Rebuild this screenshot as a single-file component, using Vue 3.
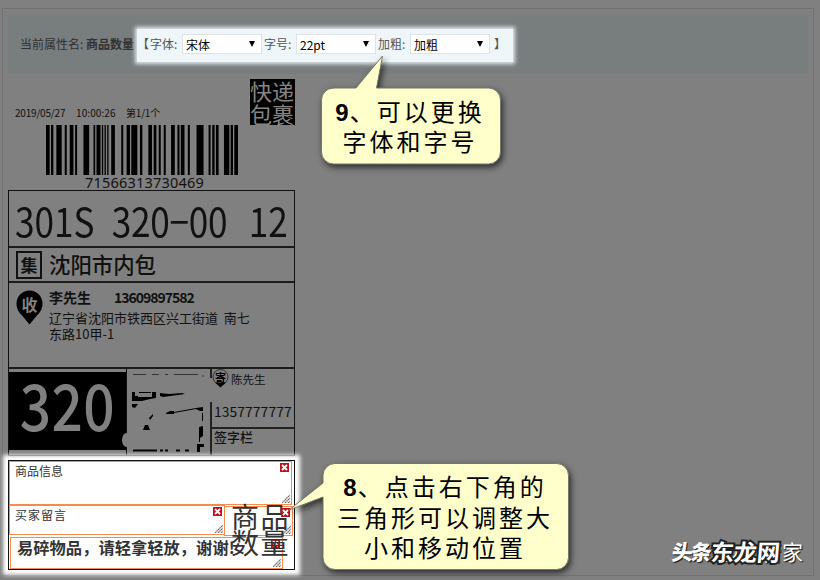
<template>
  <div class="print-page">
    <div class="panel">
      <div class="toolbar">
        <span class="current">当前属性名: <b>商品数量</b></span>
        <div class="font-options">
          <span class="bracket left">【</span>
          <template v-for="item in options" :key="item.label">
            <label>{{ item.label }}:</label>
            <div class="select"><span>{{ item.value }}</span><i></i></div>
          </template>
          <span class="bracket right">】</span>
        </div>
      </div>

      <div class="waybill">
        <div class="waybill-top">
          <div class="print-info">
            <div class="print-time"><span>2019/05/27</span><span>10:00:26</span><span>第1/1个</span></div>
            <svg class="barcode" viewBox="138 0 574 150" preserveAspectRatio="none">
              <rect v-for="(bar, i) in bars" :key="i" :x="bar[0]" y="0" :width="bar[1]" height="150" />
            </svg>
            <div class="barcode-no">71566313730469</div>
          </div>
          <div class="tag">快递<br>包裹</div>
        </div>

        <div class="waybill-body">
          <div class="row route">
            <div class="route-code"><span>301S</span><span>320−00</span><span>12</span></div>
          </div>
          <div class="row hub">
            <span class="hub-icon">集</span>
            <span class="hub-name">沈阳市内包</span>
          </div>
          <div class="row receiver">
            <svg class="pin" width="27" height="35" viewBox="0 0 27 35">
              <path d="M13.5 0.5a13 13 0 0 0-13 13c0 6 3 9.500 6 12.500l7 8.500 7-8.500c3-3 6-6.500 6-12.500a13 13 0 0 0-13-13z" />
              <text x="13.500" y="21" text-anchor="middle" font-size="16" font-weight="bold" fill="#808080">收</text>
            </svg>
            <div class="receiver-info">
              <div class="receiver-name"><span>李先生</span><span class="phone">13609897582</span></div>
              <div class="address">辽宁省沈阳市铁西区兴工街道&nbsp; 南七<br>东路10甲-1</div>
            </div>
          </div>
          <div class="row bottom">
            <div class="area"><div class="area-code"><span>320</span></div></div>
            <div class="qr">
              <svg width="83" height="86" viewBox="0 0 83 86">
                <path d="M6 5.500h13M25 5.500h7M38 5.500h3M47 5.500h24M76 6v2" stroke="#333" stroke-width="1" />
                <path d="M5 23h3v4h3v1h14v-5h4v6l-6 1-8 2H5zM12 23h12v1H12zM33 24l9 1 13-1 3 1-22 3-3-1zM5 35h6l-3 4-3-1z" />
                <path d="M39 44l4-2h4v3h-8zM47 43l22-4v1l-22 4zM69 39l7-1v4h-3l-4-2zM22 49l4-4v2l-3 4z" />
                <path d="M16 61l2-5h3l2 5zM72 58l4-1v10l-3 2v4h-1zM70 75h7v3h-4v5h-3zM75 44h1v8h-1z" />
                <path d="M6 81.500h24M33 81.500h3M38 81.500h3M49 81.500h4M58 81.500h4" stroke="#000" stroke-width="2" />
                <path class="smudge" d="M81 9h4v24h-4z" />
                <ellipse class="smudge" cx="-.5" cy="71" rx="4.500" ry="7" />
              </svg>
            </div>
            <div class="sender">
              <div class="sender-info">
                <div class="sender-name">
                  <svg width="17" height="19" viewBox="0 0 17 19">
                    <circle cx="8.500" cy="8" r="7.500" fill="none" stroke="#333" />
                    <path d="M3 13.500h11L8.500 18.500z" />
                    <text x="8.500" y="12.500" text-anchor="middle" font-size="11" font-weight="bold">寄</text>
                  </svg>
                  <span>陈先生</span>
                </div>
                <div class="sender-phone">1357777777</div>
              </div>
              <div class="sign">签字栏</div>
            </div>
          </div>
        </div>
      </div>
    </div>

    <!-- draggable fields -->
    <div class="editor">
      <div v-for="f in fields" :key="f.name" class="field" :class="f.name">
        <span class="field-text">{{ f.text }}</span>
        <svg class="close" width="9" height="9" viewBox="0 0 9 9">
          <rect width="9" height="9" fill="#c4101c" />
          <path d="M2 2l5 5M7 2L2 7" stroke="#fff" stroke-width="1.800" />
        </svg>
        <svg class="grip" width="8" height="8" viewBox="0 0 8 8">
          <path d="M0 8L8 0M3 8l5-5M6 8l2-2" stroke="#666" stroke-width="1.200" stroke-dasharray="1.600 .5" />
        </svg>
      </div>
    </div>

    <div class="callout callout-font">
      <svg width="180" height="112" viewBox="0 0 180 112">
        <path d="M12 34H35L61.500 2 55.500 34H167.500a12 12 0 0 1 12 12V98a12 12 0 0 1-12 12H12.500a12 12 0 0 1-12-12V46a12 12 0 0 1 12-12z" />
      </svg>
      <p><b>9</b>、可以更换<br>字体和字号</p>
    </div>

    <div class="callout callout-size">
      <svg width="282" height="108" viewBox="0 0 282 108">
        <path d="M47 .5H268.500a12 12 0 0 1 12 12V94.500a12 12 0 0 1-12 12H47a12 12 0 0 1-12-12V34L1 47 35 20V12.500a12 12 0 0 1 12-12z" />
      </svg>
      <p><b>8</b>、点击右下角的<br>三角形可以调整大<br>小和移动位置</p>
    </div>

    <div class="watermark">
      <span class="wm-head">头条</span>
      <span class="wm-user">@</span>
      <span class="wm-site">东龙网</span>
      <span class="wm-tail">管家</span>
    </div>
  </div>
</template>

<script setup>
import { ref } from 'vue';

const options = ref([
  { label: '字体', value: '宋体' },
  { label: '字号', value: '22pt' },
  { label: '加粗', value: '加粗' },
]);

const fields = ref([
  { name: 'goods', text: '商品信息' },
  { name: 'message', text: '买家留言' },
  { name: 'notice', text: '易碎物品，请轻拿轻放，谢谢!' },
  { name: 'count', text: '商品数量' },
]);

// [x, width] of every bar
const bars = [
  [138, 11], [153, 7], [169, 16], [194, 6], [209, 11], [225, 6], [250, 17], [280, 5],
  [289, 12], [305, 4], [313, 4], [321, 4], [333, 11], [363, 6], [379, 10], [393, 18],
  [419, 7], [444, 11], [460, 8], [475, 6], [490, 6], [512, 11], [531, 6], [541, 11],
  [562, 6], [588, 21], [624, 6], [635, 7], [646, 8], [670, 16], [690, 7], [701, 11],
];
</script>

<style>
body {
  margin: 0;
  background: #808080;
}
</style>

<style scoped>
.print-page {
  position: relative;
  box-sizing: border-box;
  width: 820px;
  height: 580px;
  padding: 8px 0 0 2px;
  overflow: hidden;
  background: #808080;
  font-family: "Noto Sans CJK SC", sans-serif;
  color: #111;
}

.panel {
  box-sizing: border-box;
  width: 812px;
  height: 568px;
  padding: 5px;
  border: 1px solid #717171;
}

/* Toolbar */
.toolbar {
  display: flex;
  align-items: center;
  box-sizing: border-box;
  width: 800px;
  height: 60px;
  padding-left: 12px;
  background: #787d7e;
  font-size: 12px;
  white-space: nowrap;
}

.current {
  width: 117px;
  padding-bottom: 2px;
  color: #303233;
}

.font-options {
  display: flex;
  align-items: center;
  box-sizing: border-box;
  width: 376px;
  height: 33px;
  margin-top: 2px;
  padding-bottom: 2px;
  background: #eef6f9;
  box-shadow: 0 0 4px 2px #e4ecef;
  color: #555;
}

.font-options label {
  width: 32px;
  padding-bottom: 1px;
}

.bracket {
  width: 13px;
  padding-bottom: 1px;
}

.bracket.right {
  margin-left: 2px;
}

.select {
  display: flex;
  align-items: center;
  justify-content: space-between;
  box-sizing: border-box;
  width: 80px;
  height: 20px;
  margin-right: 2px;
  padding: 0 6px 0 3px;
  border: 1px solid #dfe3e5;
  background: #fff;
  color: #000;
}

.select i {
  border: 3.5px solid transparent;
  border-top: 6px solid #000;
  border-bottom: 0;
}

/* Waybill */
.waybill {
  width: 287px;
}

.waybill-top {
  display: flex;
  justify-content: space-between;
  height: 116px;
}

.print-info {
  display: flex;
  flex-direction: column;
  width: 240px;
  padding-top: 32px;
}

.print-time {
  display: flex;
  height: 14px;
  margin-left: 7px;
  line-height: 14px;
  font-size: 10px;
  letter-spacing: -0.2px;
  color: #111;
}

.print-time span:nth-child(1) {
  width: 61px;
}

.print-time span:nth-child(2) {
  width: 50px;
  letter-spacing: 0.1px;
}

.barcode {
  width: 192px;
  height: 50px;
  margin: 5px 0 0 38px;
}

.barcode-no {
  margin-left: 77px;
  height: 15px;
  line-height: 15px;
  font-family: "Noto Sans", sans-serif;
  font-size: 14.5px;
  letter-spacing: 0.2px;
}

.tag {
  width: 45px;
  height: 46px;
  margin-top: 5px;
  background: #000;
  color: #858585;
  font-size: 22px;
  line-height: 23px;
}

.waybill-body {
  display: flex;
  flex-direction: column;
  box-sizing: border-box;
  height: 266px;
  border: 1px solid #111;
}

.row {
  display: flex;
  box-sizing: border-box;
  border-bottom: 2px solid #1c1c1c;
}

.route {
  height: 57px;
  padding: 8px 0 0 6px;
}

.route-code {
  display: flex;
  flex: none;
  width: 310px;
  font-size: 40px;
  line-height: 42px;
  transform: scaleX(.88);
  transform-origin: left;
}

.route-code span:nth-child(1) {
  width: 110px;
}

.route-code span:nth-child(2) {
  width: 156px;
  letter-spacing: -0.3px;
}

.hub {
  align-items: center;
  height: 35px;
  padding-left: 7px;
}

.hub-icon {
  box-sizing: border-box;
  width: 26px;
  height: 28px;
  border: 2px solid #111;
  font-size: 17px;
  line-height: 23px;
  text-align: center;
  font-weight: bold;
}

.hub-name {
  margin: -3px 0 0 7px;
  font-size: 21.4px;
  font-weight: 500;
}

.receiver {
  height: 86px;
  padding: 7px 0 0 7px;
}

.receiver-info {
  margin: -2px 0 0 6px;
}

.receiver-name {
  display: flex;
  gap: 23px;
  height: 18px;
  line-height: 18px;
  font-size: 14px;
  font-weight: bold;
}

.phone {
  letter-spacing: -1px;
}

.address {
  margin-top: 4px;
  font-size: 13px;
  line-height: 16px;
  white-space: nowrap;
}

.bottom {
  flex: 1;
  border-bottom: 0;
}

.area {
  box-sizing: border-box;
  width: 118px;
  padding: 3px 0 5px;
  border-right: 1px solid #111;
}

.area-code {
  display: flex;
  justify-content: center;
  height: 78px;
  background: #000;
  color: #808080;
  font-size: 64px;
  line-height: 63px;
  font-weight: 500;
}

.area-code span {
  letter-spacing: 0.5px;
  transform: scaleX(.86);
}

.qr {
  position: relative;
  width: 83px;
  height: 86px;
}

.qr svg {
  display: block;
  overflow: visible;
}

.smudge {
  fill: #808080;
}

.sender {
  flex: 1;
  border-left: 2px solid #222;
}

.sender-info {
  height: 58px;
  border-bottom: 2px solid #222;
}

.sender-name {
  position: relative;
  display: flex;
  align-items: center;
  gap: 2px;
  height: 19px;
  font-size: 11.5px;
}

.sender-phone {
  margin: 13px 0 0 2px;
  font-size: 14px;
  line-height: 20px;
}

.sign {
  margin-left: 2px;
  font-size: 13px;
  line-height: 16px;
  font-weight: 500;
}

/* Fields over the waybill */
.editor {
  position: absolute;
  left: 8px;
  top: 460px;
  box-sizing: border-box;
  width: 287px;
  height: 110px;
  border: 1px solid #111;
  background: #fff;
  box-shadow: 0 0 4px 5px #fff;
}

.field {
  position: absolute;
  box-sizing: border-box;
  border: 1px solid #f58b4c;
  color: #333;
  font-size: 12px;
  line-height: 18px;
}

.close,
.grip {
  position: absolute;
}

.close {
  top: 1px;
  right: 2px;
}

.grip {
  right: 1px;
  bottom: 1px;
}

.goods {
  left: 0;
  top: 0;
  width: 283px;
  height: 44px;
  padding-left: 5px;
}

.message {
  left: 0;
  top: 44px;
  width: 216px;
  height: 30px;
  padding-left: 5px;
  letter-spacing: 1px;
}

.notice {
  left: 1px;
  top: 76px;
  width: 273px;
  height: 32px;
  padding-left: 6px;
  font-size: 16.3px;
  line-height: 19px;
  font-weight: bold;
  white-space: nowrap;
}

.count {
  left: 215px;
  top: 45px;
  width: 69px;
  height: 30px;
  padding-left: 6px;
  font-size: 28px;
  line-height: 26px;
  letter-spacing: 1.5px;
}

.count .field-text {
  display: block;
  width: 61px;
  margin-top: -4px;
}

/* Callouts */
.callout {
  position: absolute;
}

.callout svg {
  display: block;
  overflow: visible;
  filter: drop-shadow(2px 3px 3px rgba(0, 0, 0, .65));
}

.callout path {
  fill: #ffffcb;
  stroke: #77776a;
  stroke-width: 1;
}

.callout p {
  position: absolute;
  margin: 0;
  text-align: center;
  font-size: 24px;
  line-height: 30.5px;
  letter-spacing: 3px;
  color: #000;
  white-space: nowrap;
}

.callout b {
  font-family: "Liberation Sans", sans-serif;
  letter-spacing: 1px;
  line-height: 1;
}

.callout-font {
  left: 320.5px;
  top: 53.5px;
}

.callout-font p {
  left: 0;
  top: 42px;
  width: 179px;
}

.callout-size {
  left: 288px;
  top: 463px;
}

.callout-size p {
  left: 34px;
  top: 8px;
  width: 246px;
}

/* Watermark */
.watermark {
  position: absolute;
  left: 672px;
  top: 537px;
  width: 134px;
  height: 28px;
  color: #fff;
  line-height: 28px;
}

.watermark span {
  position: absolute;
  top: 0;
  white-space: nowrap;
}

.wm-head {
  left: 0;
  font-size: 21px;
  font-weight: 900;
  letter-spacing: -2px;
  transform: skewX(-6deg);
  text-shadow: 1px 1px 1px #111;
}

.wm-user {
  left: 47px;
  font-size: 20px;
  text-shadow: 1px 1px 1px #111;
}

.wm-site {
  left: 39px;
  z-index: 1;
  font-size: 23px;
  font-weight: bold;
  transform: skewX(-5deg);
  -webkit-text-stroke: 4px #222;
  paint-order: stroke fill;
}

.wm-tail {
  left: 89px;
  font-size: 21px;
  text-shadow: 1px 1px 1px #111;
}
</style>
